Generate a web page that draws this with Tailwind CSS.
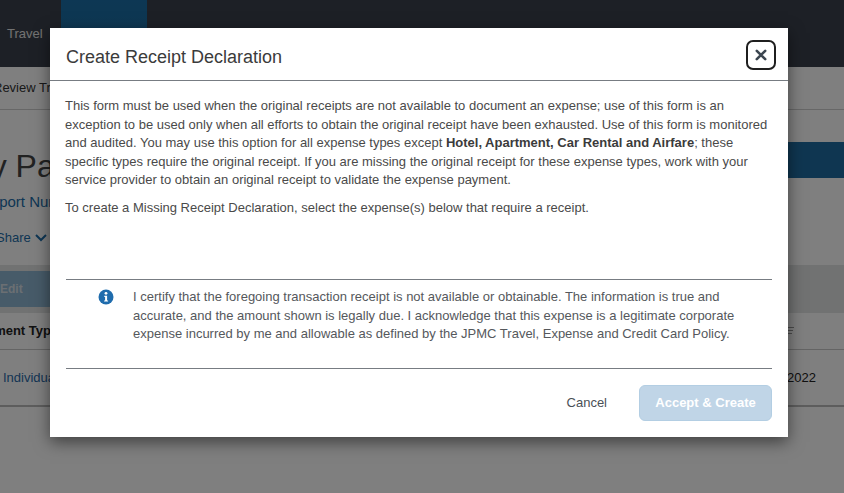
<!DOCTYPE html>
<html lang="en">

<head>
    <meta charset="UTF-8">
    <title>Create Receipt Declaration</title>
    <script src="https://cdn.jsdelivr.net/npm/@tailwindcss/browser@4"></script>
</head>

<body class="relative w-[844px] h-[493px] overflow-hidden bg-white font-['Liberation_Sans',Arial,sans-serif] text-[13px] text-[#333]">

    <!-- Page behind the dialog -->
    <nav class="h-[67px] bg-[#3a414c] flex items-stretch text-white">
        <span class="w-[61px] pl-[7px] pt-[24px] text-[13px] text-[#e4e4e4]">Travel</span>
        <span class="w-[86px] bg-gradient-to-b from-[#1a6fa8] to-[#1f6b9f] pl-[16px] pt-[24px] text-[15px]">Expense</span>
        <span class="pl-[18px] pt-[24px] text-[15px]">Invoice</span>
        <span class="pl-[24px] pt-[24px] text-[15px]">Approvals</span>
        <span class="pl-[24px] pt-[24px] text-[15px]">Credit &amp; Cards</span>
    </nav>

    <div class="h-[43px] border-b border-[#cfcfcf] flex items-center">
        <span class="-ml-[7px]">Review Transactions</span>
    </div>

    <div class="h-[66px] flex justify-between items-start">
        <h1 class="-ml-[36px] mt-[38px] text-[32px] leading-[36px] font-light text-[#444]">My Payments</h1>
        <button class="mt-[32px] w-[140px] h-[36px] bg-[#1f6ca3] text-white font-bold text-[13px] text-left pl-[80px] -mr-[80px] whitespace-nowrap">Copy Report</button>
    </div>

    <div class="h-[44px] pt-[16px] -ml-[20px] text-[15px] leading-[20px] text-[#1c6ca8]">Report Number</div>

    <div class="h-[45px] pt-[8px] -ml-[4px] text-[#1c6ca8] flex items-start gap-[4px]">
        <span class="leading-[20px]">Share</span>
        <svg class="mt-[6px]" width="12" height="8" viewBox="0 0 12 8" fill="none" stroke="currentColor" stroke-width="2"><path d="M1 1l5 5 5-5" /></svg>
    </div>

    <div class="h-[48px] bg-[#e2e4e4] pt-[6px]">
        <div class="w-[60px] h-[36px] bg-[#8fb6d2] text-[#d6dfe6] font-bold text-[12px] leading-[36px] pl-[0px]">Edit</div>
    </div>

    <div class="h-[37px] border-b border-[#c8c8c8] flex justify-between items-center">
        <span class="-ml-[29px] font-bold text-[#222]">Payment Type</span>
        <svg class="mr-[48px]" width="10" height="10" viewBox="0 0 10 10" stroke="#999" stroke-width="1"><path d="M0 1.5h8M1 4.5h6M2 7.500h4" /></svg>
    </div>

    <div class="h-[57px] border-b-2 border-[#bbb] flex justify-between items-center">
        <span class="pl-[3px] text-[#2a6aa8]">Individual</span>
        <span class="pr-[28px] text-[#222]">01/01/2022</span>
    </div>

    <!-- Backdrop -->
    <div class="absolute inset-0 bg-black/50"></div>

    <!-- Dialog -->
    <div class="absolute left-[50px] top-[28px] w-[738px] h-[409px] bg-white shadow-[0_5px_15px_rgba(0,0,0,0.5)] flex flex-col">

        <header class="h-[53px] border-b border-[#777c82] flex justify-between items-start pl-[16px] pr-[12px]">
            <h2 class="mt-[18px] text-[18px] leading-[22px] text-[#3b3b3b]">Create Receipt Declaration</h2>
            <button class="mt-[12px] w-[30px] h-[30px] rounded-[7px] border-2 border-[#1f1f1f] flex items-center justify-center">
                <svg width="12" height="12" viewBox="0 0 12 12" stroke="#3c4650" stroke-width="2.600" stroke-linecap="round"><path d="M1.800 1.800l8.400 8.400M10.200 1.800l-8.400 8.400" /></svg>
            </button>
        </header>

        <section class="h-[198px] px-[15px] pt-[16px] text-[13px] leading-[18.57px] text-[#4a4a4a]">
            <p>This form must be used when the original receipts are not available to document an expense; use of this form is an exception to be used only when all efforts to obtain the original receipt have been exhausted. Use of this form is monitored and audited. You may use this option for all expense types except <b class="text-[#3b3b3b]">Hotel, Apartment, Car Rental and Airfare</b>; these specific types require the original receipt. If you are missing the original receipt for these expense types, work with your service provider to obtain an original receipt to validate the expense payment.</p>
            <p class="mt-[9px]">To create a Missing Receipt Declaration, select the expense(s) below that require a receipt.</p>
        </section>

        <section class="mx-[16px] h-[90px] border-y border-[#777c82] flex items-start text-[13px] leading-[18.57px] text-[#55585c]">
            <svg class="ml-[32px] mt-[9px] shrink-0" width="16" height="16" viewBox="0 0 16 16">
                <circle cx="8" cy="8" r="7.500" fill="#1f6cad" />
                <circle cx="8" cy="4.300" r="1.400" fill="#fff" />
                <path d="M6.300 6.700h2.800v4.700h1v1.200H6.100v-1.200h1v-3.500h-.8z" fill="#fff" />
            </svg>
            <p class="ml-[19px] mt-[8px] w-[620px]">I certify that the foregoing transaction receipt is not available or obtainable. The information is true and accurate, and the amount shown is legally due. I acknowledge that this expense is a legitimate corporate expense incurred by me and allowable as defined by the JPMC Travel, Expense and Credit Card Policy.</p>
        </section>

        <footer class="flex-1 flex justify-end items-start pr-[16px] pt-[16px]">
            <button class="mt-[9px] mr-[32px] text-[13px] leading-[18px] text-[#4a5056]">Cancel</button>
            <button class="w-[133px] h-[36px] rounded-[6px] border border-[#b3cee3] bg-[#c0d5e7] text-white font-bold text-[13px]">Accept &amp; Create</button>
        </footer>
    </div>

</body>

</html>
